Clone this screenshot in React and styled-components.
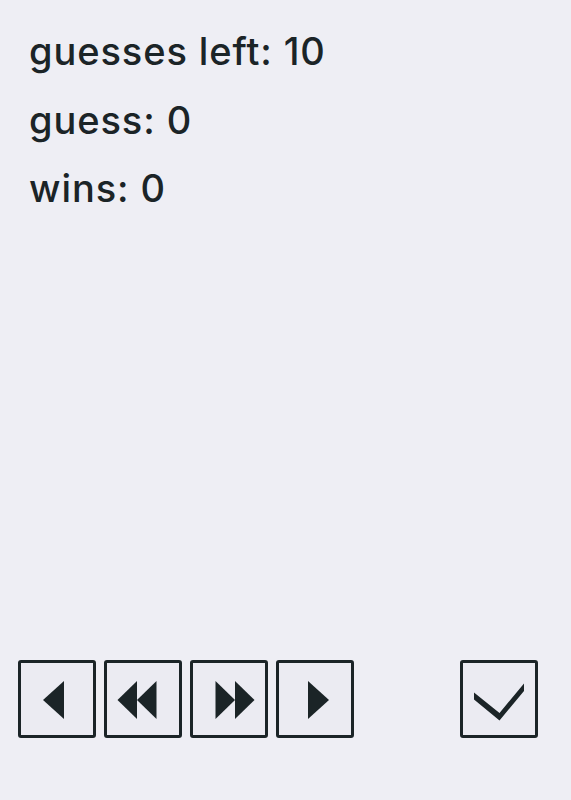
import React, { useState } from "react";
import styled, { createGlobalStyle } from "styled-components";

const GlobalStyle = createGlobalStyle`
  html, body {
    margin: 0;
    padding: 0;
    background-color: #eeeef4;
  }
  * {
    box-sizing: border-box;
  }
`;

const Page = styled.div`
  display: flex;
  flex-direction: column;
  height: 100vh;
  padding: 17px 33px 62px 18px;
  font-family: Inter, "Noto Sans", sans-serif;
  color: #1b2427;
`;

const Stats = styled.div`
  display: flex;
  flex-direction: column;
  padding-left: 11px;
`;

const Stat = styled.p`
  margin: 0;
  font-size: 38px;
  line-height: 68.5px;
  font-weight: 500;
  letter-spacing: 0.9px;
`;

const Controls = styled.div`
  margin-top: auto;
  display: flex;
  align-items: center;
  gap: 8px;
`;

const Key = styled.button`
  width: 78px;
  height: 78px;
  padding: 0;
  margin-left: ${(p) => (p.$push ? "auto" : "0")};
  border: 3px solid #1b2427;
  border-radius: 3px;
  background-color: #ebebf2;
  cursor: pointer;
  svg {
    display: block;
    margin: -3px;
  }
  &:active {
    background-color: #dcdce6;
  }
`;

// shapes are drawn in the key's outer 78x78 box
const Glyph = ({ children }) => (
  <svg width="78" height="78" viewBox="0 0 78 78" fill="#1b2427">
    {children}
  </svg>
);

export default function App() {
  const [guess, setGuess] = useState(0);
  const [left, setLeft] = useState(10);
  const [wins] = useState(0);

  return (
    <>
      <GlobalStyle />
      <Page>
        <Stats>
          <Stat>guesses left: {left}</Stat>
          <Stat>guess: {guess}</Stat>
          <Stat>wins: {wins}</Stat>
        </Stats>
        <Controls>
          <Key onClick={() => setGuess((g) => g - 1)}>
            <Glyph>
              <polygon points="25,40 46,21 46,59" />
            </Glyph>
          </Key>
          <Key onClick={() => setGuess((g) => g - 10)}>
            <Glyph>
              <polygon points="13.5,40 33,21 33,59" />
              <polygon points="33,40 52.5,21 52.5,59" />
            </Glyph>
          </Key>
          <Key onClick={() => setGuess((g) => g + 10)}>
            <Glyph>
              <polygon points="25.5,21 25.5,59 45,40" />
              <polygon points="45,21 45,59 64.5,40" />
            </Glyph>
          </Key>
          <Key onClick={() => setGuess((g) => g + 1)}>
            <Glyph>
              <polygon points="32,21 32,59 53,40" />
            </Glyph>
          </Key>
          <Key $push onClick={() => setLeft((n) => Math.max(0, n - 1))}>
            <Glyph>
              <polygon points="14,32.5 39.5,53 64,23.5 64,31 39.5,60.5 14,39.5" />
            </Glyph>
          </Key>
        </Controls>
      </Page>
    </>
  );
}
